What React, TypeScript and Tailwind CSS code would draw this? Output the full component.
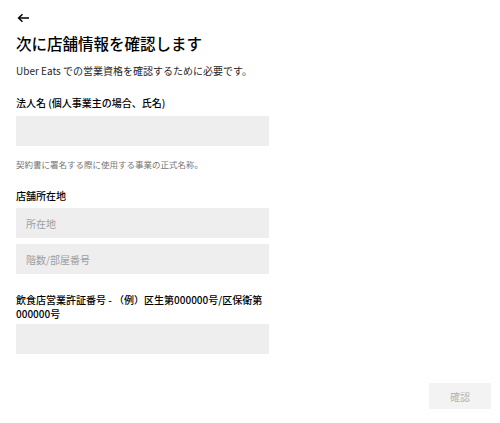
import React from "react";

export default function App() {
  return (
    <div className="w-[500px] h-[423px] bg-white text-black font-['Noto_Sans_CJK_JP','Noto_Sans',sans-serif] flex flex-col">
      <div className="pl-4 w-[269px] flex flex-col">
        <div className="pt-[11px] h-[25px] flex items-center">
          <svg width="13" height="10" viewBox="0 0 13 10" className="ml-[1px]" fill="none" stroke="#000" strokeWidth="1.5">
            <path d="M12 5H1.8" />
            <path d="M5.5 1.2L1.6 5l3.9 3.8" />
          </svg>
        </div>
        <h1 className="mt-[6px] text-[15.5px] leading-[24px] font-medium">次に店舗情報を確認します</h1>
        <p className="mt-[8px] text-[10px] leading-[16px] text-[#1f1f1f]">Uber Eats での営業資格を確認するために必要です。</p>
        <label className="mt-[16px] text-[10px] leading-[16px] font-medium">法人名 (個人事業主の場合、氏名)</label>
        <input className="mt-[5px] h-[30px] w-full bg-[#eeeeee] outline-none px-[10px] text-[10px]" />
        <p className="mt-[12px] text-[8.5px] leading-[12px] text-[#757575]">契約書に署名する際に使用する事業の正式名称。</p>
        <label className="mt-[18px] text-[10px] leading-[16px] font-medium">店舗所在地</label>
        <input
          className="mt-[4px] h-[30px] w-full bg-[#eeeeee] outline-none px-[10px] text-[10px] placeholder:text-[#9e9e9e]"
          placeholder="所在地"
        />
        <input
          className="mt-[6px] h-[30px] w-full bg-[#eeeeee] outline-none px-[10px] text-[10px] placeholder:text-[#9e9e9e]"
          placeholder="階数/部屋番号"
        />
        <label className="mt-[19px] text-[10px] leading-[14px] font-medium">
          飲食店営業許証番号 - （例）区生第000000号/区保衛第000000号
        </label>
        <input className="mt-[3px] h-[30px] w-full bg-[#eeeeee] outline-none px-[10px] text-[10px]" />
      </div>
      <div className="mt-[29px] flex justify-end pr-[9px]">
        <button className="w-[62px] h-[26px] bg-[#f3f3f3] text-[#b3b3b3] text-[10px] flex items-center justify-center">
          確認
        </button>
      </div>
    </div>
  );
}
